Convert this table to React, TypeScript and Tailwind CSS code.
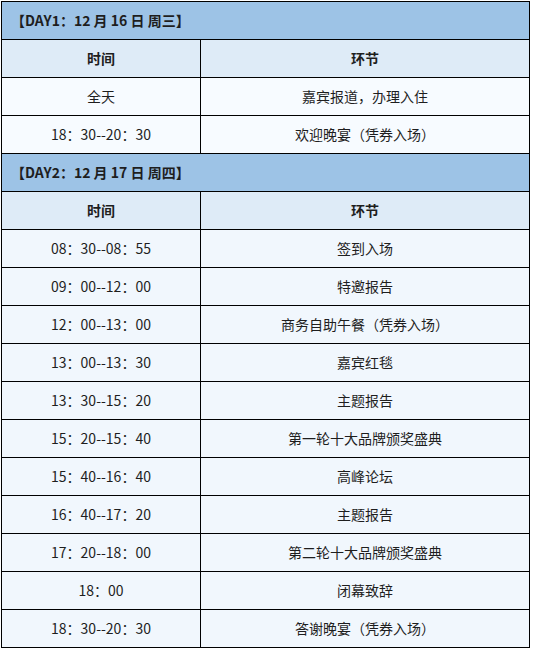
const DAYS = [
  {
    title: "【DAY1：12 月 16 日 周三】",
    bg: "bg-[#f7fbff]",
    rows: [
      ["全天", "嘉宾报道，办理入住"],
      ["18：30--20：30", "欢迎晚宴（凭券入场）"],
    ],
  },
  {
    title: "【DAY2：12 月 17 日 周四】",
    bg: "bg-[#f1f7fd]",
    rows: [
      ["08：30--08：55", "签到入场"],
      ["09：00--12：00", "特邀报告"],
      ["12：00--13：00", "商务自助午餐（凭券入场）"],
      ["13：00--13：30", "嘉宾红毯"],
      ["13：30--15：20", "主题报告"],
      ["15：20--15：40", "第一轮十大品牌颁奖盛典"],
      ["15：40--16：40", "高峰论坛"],
      ["16：40--17：20", "主题报告"],
      ["17：20--18：00", "第二轮十大品牌颁奖盛典"],
      ["18：00", "闭幕致辞"],
      ["18：30--20：30", "答谢晚宴（凭券入场）"],
    ],
  },
];

function Row({ left, right, className }: { left: string; right: string; className: string }) {
  return (
    <div className={`grid grid-cols-[199px_1fr] h-[38px] border-b border-black ${className}`}>
      <div className="flex items-center justify-center border-r border-black">{left}</div>
      <div className="flex items-center justify-center">{right}</div>
    </div>
  );
}

export default function App() {
  return (
    <div className="min-h-screen bg-white pt-[1px] pl-[1px] text-[14px] text-[#1e1e1e] font-['Noto_Sans_CJK_SC','Noto_Sans',sans-serif]">
      <div className="w-[529px] border-t border-l border-r border-black">
        {DAYS.map((day) => (
          <div key={day.title}>
            <div className="h-[38px] flex items-center pl-[9px] font-bold bg-[#9dc3e6] border-b border-black">
              {day.title}
            </div>
            <Row left="时间" right="环节" className="font-bold bg-[#deebf7]" />
            {day.rows.map(([t, s]) => (
              <Row key={t + s} left={t} right={s} className={day.bg} />
            ))}
          </div>
        ))}
      </div>
    </div>
  );
}
